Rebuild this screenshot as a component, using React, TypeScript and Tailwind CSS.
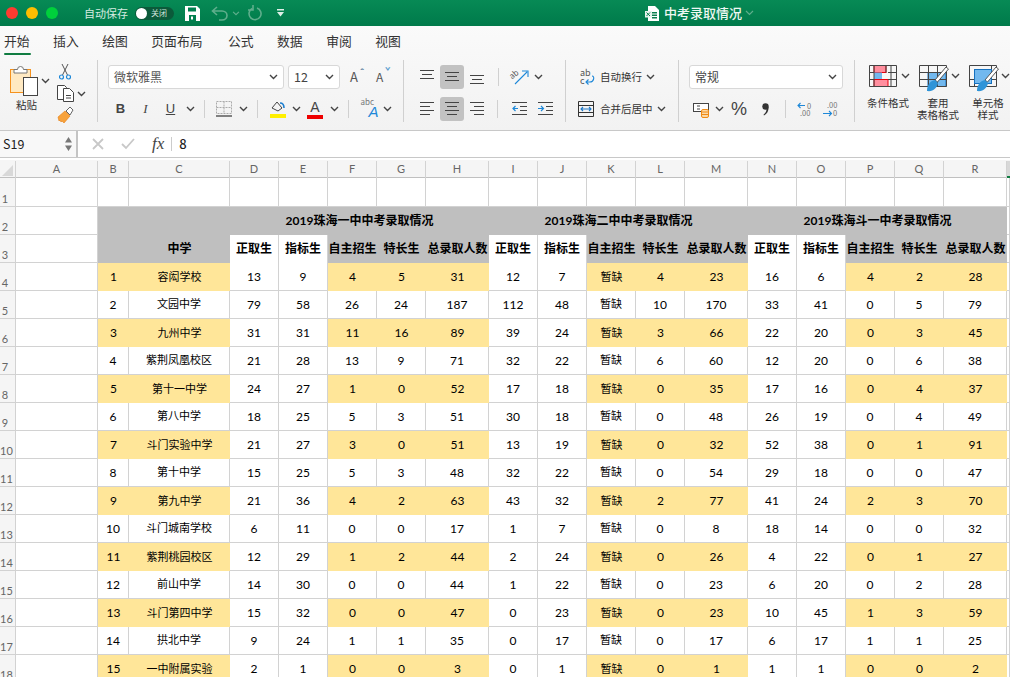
import type { ReactNode } from 'react';

const CJK = "font-['Lato','Noto_Sans_CJK_SC',sans-serif]";
const LINE = 'border-[#d2d2d2]';
const COLS =
  'grid grid-cols-[16px_82px_31px_101px_49px_49px_49px_49px_63px_49px_49px_49px_49px_63px_49px_49px_49px_49px_63px_3px]';

type Row = [string, ...(number | string)[]];

const ROWS: Row[] = [
  ['容闳学校', 13, 9, 4, 5, 31, 12, 7, '暂缺', 4, 23, 16, 6, 4, 2, 28],
  ['文园中学', 79, 58, 26, 24, 187, 112, 48, '暂缺', 10, 170, 33, 41, 0, 5, 79],
  ['九州中学', 31, 31, 11, 16, 89, 39, 24, '暂缺', 3, 66, 22, 20, 0, 3, 45],
  ['紫荆凤凰校区', 21, 28, 13, 9, 71, 32, 22, '暂缺', 6, 60, 12, 20, 0, 6, 38],
  ['第十一中学', 24, 27, 1, 0, 52, 17, 18, '暂缺', 0, 35, 17, 16, 0, 4, 37],
  ['第八中学', 18, 25, 5, 3, 51, 30, 18, '暂缺', 0, 48, 26, 19, 0, 4, 49],
  ['斗门实验中学', 21, 27, 3, 0, 51, 13, 19, '暂缺', 0, 32, 52, 38, 0, 1, 91],
  ['第十中学', 15, 25, 5, 3, 48, 32, 22, '暂缺', 0, 54, 29, 18, 0, 0, 47],
  ['第九中学', 21, 36, 4, 2, 63, 43, 32, '暂缺', 2, 77, 41, 24, 2, 3, 70],
  ['斗门城南学校', 6, 11, 0, 0, 17, 1, 7, '暂缺', 0, 8, 18, 14, 0, 0, 32],
  ['紫荆桃园校区', 12, 29, 1, 2, 44, 2, 24, '暂缺', 0, 26, 4, 22, 0, 1, 27],
  ['前山中学', 14, 30, 0, 0, 44, 1, 22, '暂缺', 0, 23, 6, 20, 0, 2, 28],
  ['斗门第四中学', 15, 32, 0, 0, 47, 0, 23, '暂缺', 0, 23, 10, 45, 1, 3, 59],
  ['拱北中学', 9, 24, 1, 1, 35, 0, 17, '暂缺', 0, 17, 6, 17, 1, 1, 25],
  ['一中附属实验', 2, 1, 0, 0, 3, 0, 1, '暂缺', 0, 1, 1, 1, 0, 0, 2],
];

const LETTERS = 'ABCDEFGHIJKLMNOPQRS'.split('');
const SUB = ['正取生', '指标生', '自主招生', '特长生', '总录取人数'];

// white columns inside a striped row: D E, I J, N O (index in the number list)
const isWhite = (i: number) => i % 5 < 2;

function Chev({ className = '' }: { className?: string }) {
  return (
    <svg width="9" height="6" viewBox="0 0 9 6" className={className} fill="none" stroke="#444" strokeWidth="1.4">
      <path d="M1 1l3.5 3.5L8 1" />
    </svg>
  );
}

function Cell({ className, children }: { className: string; children?: ReactNode }) {
  return <div className={`flex h-6 shrink-0 items-center justify-center ${className}`}>{children}</div>;
}

function Sep({ className }: { className: string }) {
  return (
    <Cell className={className}>
      <div className="h-[18px] w-px bg-[#d0d0d0]" />
    </Cell>
  );
}

function Lines({ kind }: { kind: 'top' | 'mid' | 'bot' | 'left' | 'center' | 'right' }) {
  const d = {
    top: 'M0 1.5h14M2 5.5h10M0 9.5h14',
    mid: 'M0 3.5h14M2 7.5h10M0 11.5h14',
    bot: 'M0 6.5h14M2 10.5h10M0 14.5h14',
    left: 'M0 1.5h14M0 5.5h10M0 9.5h14M0 13.5h10',
    center: 'M0 1.5h14M2 5.5h10M0 9.5h14M2 13.5h10',
    right: 'M0 1.5h14M4 5.5h10M0 9.5h14M4 13.5h10',
  }[kind];
  return (
    <svg width="14" height="16" viewBox="0 0 14 16" fill="none" stroke="#444" strokeWidth="1">
      <path d={d} />
    </svg>
  );
}

function TableIcon({ kind }: { kind: 'cond' | 'table' | 'cell' }) {
  return (
    <svg width="30" height="27" viewBox="0 0 30 27" fill="none">
      {kind === 'cond' && (
        <>
          <rect x="5" y="0.5" width="12" height="7" fill="#ff8e9e" stroke="#e8000c" />
          <rect x="5" y="7.5" width="8" height="7" fill="#72b8ee" />
          <rect x="5" y="14.5" width="14" height="7" fill="#ff8e9e" stroke="#e8000c" />
          <path d="M.5.5h27v21H.5zM.5 7.500h4.500M.5 14.500h4.500M19 7.500h8.500M19 14.500h8.500M5 .5v21M22 .5v21M17 .5v7" stroke="#444" />
        </>
      )}
      {kind === 'table' && (
        <>
          <rect x="9" y="7.500" width="18" height="14" fill="#72b8ee" stroke="#1570bf" />
          <path d="M.5.5h27v21H.5zM.5 7.500h27M.5 14.500h27M9.500 .5v21M18.500 .5v21" stroke="#444" />
        </>
      )}
      {kind === 'cell' && (
        <>
          <path d="M.5.5h27v21H.5zM.5 14.500h4.500M22 14.500h5.500M5.500 18v4M22.500 .5v4" stroke="#444" />
          <rect x="5.500" y="4.500" width="17" height="14" fill="#72b8ee" stroke="#1570bf" />
        </>
      )}
      {kind !== 'cond' && (
        <>
          <path d="M16 15L27 2l2.500 2-11 13z" fill="#fff" stroke="#555" />
          <path d="M8 26c0-6 3-10 8-11l3 3c-1 5-5 9-11 8z" fill="#2f94d8" />
        </>
      )}
    </svg>
  );
}

function StyleButton({ kind, label }: { kind: 'cond' | 'table' | 'cell'; label: string[] }) {
  return (
    <div className="flex w-[50px] shrink-0 flex-col items-center">
      <div className="flex h-[32px] items-start gap-[3px] self-start pl-[6px] pt-[5px]">
        <TableIcon kind={kind} />
        <Chev className="-ml-[1px] mt-[8px]" />
      </div>
      <div className="mt-[5px] whitespace-nowrap text-center text-[10.5px] leading-[12px] text-[#333]">
        {label.map((l) => (
          <div key={l}>{l}</div>
        ))}
      </div>
    </div>
  );
}

function TitleBar() {
  return (
    <div className="relative flex h-[26px] items-center bg-gradient-to-b from-[#078a55] to-[#007a4a]">
      <div className="ml-[6px] h-3 w-3 rounded-full bg-[#ff3b30]" />
      <div className="ml-2 h-3 w-3 rounded-full bg-[#ffbd00]" />
      <div className="ml-2 h-3 w-3 rounded-full bg-[#00d03c]" />
      <span className="ml-[26px] text-[11px] text-[#d5ebe0]">自动保存</span>
      <div className="ml-[7px] flex h-[13px] w-[39px] items-center rounded-full bg-[#0b5a3a] pl-px">
        <div className="h-[11px] w-[11px] rounded-full bg-white" />
        <span className="ml-[4px] text-[8px] text-[#cfe5da]">关闭</span>
      </div>
      <svg width="15" height="15" viewBox="0 0 15 15" className="ml-[11px]">
        <path d="M0 0h12l3 3v12H0z" fill="#fff" />
        <path d="M3 1.5h8v4H3z" fill="#007f4e" />
        <path d="M4 9h7v6H4z" fill="#007f4e" />
        <path d="M6 10.5h2v3H6z" fill="#fff" />
      </svg>
      <svg width="18" height="15" viewBox="0 0 18 15" className="ml-[11px]" fill="none" stroke="#5fae8c" strokeWidth="1.6">
        <path d="M6 1L1.5 5 6 9M2 5h9c3 0 5 2 5 4.5S14 14 11 14H8" />
      </svg>
      <svg width="8" height="5" viewBox="0 0 9 6" className="ml-[3px]" fill="none" stroke="#5fae8c" strokeWidth="1.4">
        <path d="M1 1l3.5 3.5L8 1" />
      </svg>
      <svg width="15" height="16" viewBox="0 0 15 16" className="ml-[8px]" fill="none" stroke="#5fae8c" strokeWidth="1.6">
        <path d="M4 3.5a6 6 0 1 0 5-.5M5 0v5H0" />
      </svg>
      <svg width="7" height="8" viewBox="0 0 7 8" className="ml-[14px]" fill="#dff0e8">
        <path d="M0 0h7v1.4H0zM0 3h7L3.5 7.5z" />
      </svg>
      <div className="ml-[361px] flex items-center">
        <svg width="14" height="15" viewBox="0 0 14 15">
          <path d="M3 0h7l4 4v11H3z" fill="#fff" />
          <path d="M7 6h5v1.4H7zM7 8.5h5v1.4H7zM7 11h5v1.4H7z" fill="#0a7d4d" />
          <rect x="0" y="5" width="7" height="6.5" fill="#e8f4ee" />
          <path d="M1.5 6.5l3.5 3.5M5 6.5L1.5 10" stroke="#0a7d4d" strokeWidth="1" />
        </svg>
        <span className="ml-[5px] text-[13px] font-medium text-[#eef7f2]">中考录取情况</span>
        <svg width="9" height="6" viewBox="0 0 9 6" className="ml-[3px]" fill="none" stroke="#5fae8c" strokeWidth="1.2">
          <path d="M1 1l3.5 3.5L8 1" />
        </svg>
      </div>
    </div>
  );
}

function Tabs() {
  const tabs = ['开始', '插入', '绘图', '页面布局', '公式', '数据', '审阅', '视图'];
  return (
    <div className="flex h-[27px] gap-[23.5px] pl-1 pt-[6px] text-[12.8px] leading-[18px] text-[#333]">
      {tabs.map((t, i) => (
        <div key={t} className={`relative whitespace-nowrap ${t === '页面布局' ? 'mr-[2px]' : ''}`}>
          {t}
          {i === 0 && <div className="absolute -bottom-[2px] left-0 h-[2px] w-[27px] rounded bg-[#107c41]" />}
        </div>
      ))}
    </div>
  );
}

function Ribbon() {
  return (
    <div className="flex h-[77px] pt-[7px]">
      {/* clipboard */}
      <div className="relative h-[62px] w-[98px] shrink-0 border-r border-[#d0d0d0]">
        <div className="flex">
          <div className="ml-[10px] flex w-[28px] shrink-0 flex-col items-start">
            <svg width="28" height="31" viewBox="0 0 28 31" className="mt-[5px]">
              <rect x="0.5" y="4.5" width="20" height="23" fill="#ffe9c2" stroke="#f5921e" />
              <path d="M4 8V4.5h3.5a3 3 0 0 1 6 0H17V8z" fill="#fff" stroke="#777" />
              <rect x="13.5" y="12.5" width="14" height="18" fill="#fff" stroke="#444" />
            </svg>
            <span className="ml-[6px] mt-[2px] whitespace-nowrap text-[10.5px] leading-[14px] text-[#333]">粘贴</span>
          </div>
          <Chev className="ml-[3px] mt-[18px]" />
          <div className="ml-[7px] flex flex-col items-start">
            <svg width="12" height="16" viewBox="0 0 12 16" className="ml-[2px] mt-[4px]" fill="none">
              <path d="M3 0l5.5 11M9 0L3.5 11" stroke="#555" />
              <circle cx="2.5" cy="13" r="2" stroke="#1e88d8" strokeWidth="1.2" />
              <circle cx="9.5" cy="13" r="2" stroke="#1e88d8" strokeWidth="1.2" />
            </svg>
            <div className="mt-[5px] flex items-center">
              <svg width="17" height="17" viewBox="0 0 17 17" fill="#fff" stroke="#444">
                <path d="M.5.5h7l2 2v12H.5z" />
                <path d="M6.5 3.5h6l4 4v9h-10z" />
                <path d="M9 10.5h5M9 13h5" />
              </svg>
              <Chev className="ml-[3px]" />
            </div>
            <svg width="17" height="16" viewBox="0 0 17 16" className="mt-[5px]">
              <path d="M1 10l7-6 5 5-6 7-2-2-1 1-1-2-1 1z" fill="#f7a23b" stroke="#e67e12" strokeWidth="0.6" />
              <path d="M9 4l4-4 3 3-3 5z" fill="#fff" stroke="#666" />
            </svg>
          </div>
        </div>
      </div>

      {/* font */}
      <div className="h-[62px] w-[306px] shrink-0 border-r border-[#d0d0d0] pl-[10px] pt-[5px]">
        <div className="flex h-6 items-center">
          <div className="flex h-6 w-[176px] items-center justify-between rounded-[3px] border border-[#d8d8d8] bg-white px-[5px] text-[12px] text-[#555]">
            微软雅黑
            <Chev />
          </div>
          <div className="ml-1 flex h-6 w-[52px] items-center justify-between rounded-[3px] border border-[#d8d8d8] bg-white pl-[5px] pr-[5px] text-[12.5px] text-[#444]">
            12
            <Chev />
          </div>
          <span className="relative ml-[10px] w-[20px] text-[13px] text-[#555]">
            A<span className="absolute -top-[2px] left-[10px] text-[9px] font-bold text-[#5a7e9c]">ˆ</span>
          </span>
          <span className="relative ml-[6px] text-[12px] text-[#555]">
            A<span className="absolute -top-[3px] left-[9px] text-[9px] font-bold text-[#5a9ccf]">ˇ</span>
          </span>
        </div>
        <div className="mt-2 flex text-[#444]">
          <Cell className="w-[25px] font-['Liberation_Sans',sans-serif] text-[13px] font-bold">B</Cell>
          <Cell className="w-[25px] font-['Liberation_Serif',serif] text-[13px] italic">I</Cell>
          <Cell className="w-[25px] font-['Liberation_Sans',sans-serif] text-[13px] underline">U</Cell>
          <Cell className="w-[14px]"><Chev /></Cell>
          <Sep className="w-[14px]" />
          <Cell className="w-[26px]">
            <svg width="16" height="16" viewBox="0 0 16 16" fill="none">
              <path d="M.5.5h15v12H.5zM8 .5v12M.5 6.5h15" stroke="#aaa" strokeDasharray="2 1" />
              <path d="M0 15h16" stroke="#333" strokeWidth="1.2" />
            </svg>
          </Cell>
          <Cell className="w-[12px]"><Chev /></Cell>
          <Sep className="w-[16px]" />
          <Cell className="w-[26px]">
            <svg width="16" height="19" viewBox="0 0 16 19" fill="none">
              <path d="M2 8l5-6 5 6-4 3z" stroke="#444" />
              <path d="M10 3c3 0 4 2 4 5" stroke="#1e7fd0" strokeWidth="1.6" />
              <rect x="0" y="14" width="16" height="4" fill="#ffef00" />
            </svg>
          </Cell>
          <Cell className="w-[10px]"><Chev /></Cell>
          <Cell className="w-[28px]">
            <div className="flex flex-col items-center">
              <span className="font-['Liberation_Sans',sans-serif] text-[14px] leading-[14px] text-[#444]">A</span>
              <div className="mt-px h-1 w-4 bg-[#ee0000]" />
            </div>
          </Cell>
          <Cell className="w-[10px]"><Chev /></Cell>
          <Sep className="w-[18px]" />
          <Cell className="w-[25px]">
            <div className="relative h-5 w-[18px]">
              <span className="absolute -top-[2px] left-0 text-[8px] leading-[10px] text-[#777]">abc</span>
              <span className="absolute bottom-0 right-0 font-['Liberation_Sans',sans-serif] text-[15px] italic leading-[15px] text-[#1e88d8]">A</span>
            </div>
          </Cell>
          <Cell className="w-[10px]"><Chev /></Cell>
        </div>
      </div>

      {/* alignment */}
      <div className="h-[62px] w-[162px] shrink-0 border-r border-[#d0d0d0] pl-[12px] pt-[5px]">
        <div className="flex">
          <Cell className="w-[22px]"><Lines kind="top" /></Cell>
          <Cell className="ml-[2px] w-[24px] rounded-[3px] bg-[#c2c2c2]"><Lines kind="mid" /></Cell>
          <Cell className="w-[26px]"><Lines kind="bot" /></Cell>
          <Sep className="w-[16px]" />
          <Cell className="w-[27px]">
            <svg width="18" height="16" viewBox="0 0 18 16" fill="none" className="overflow-visible">
              <path d="M4 15L16 3M11 2h6v6" stroke="#1e88d8" strokeWidth="1.1" />
              <text x="0" y="8" fontSize="8" fill="#555" transform="rotate(-40 4 8)">ab</text>
            </svg>
          </Cell>
          <Cell className="w-[10px]"><Chev /></Cell>
        </div>
        <div className="mt-2 flex">
          <Cell className="w-[22px]"><Lines kind="left" /></Cell>
          <Cell className="ml-[2px] w-[24px] rounded-[3px] bg-[#c2c2c2]"><Lines kind="center" /></Cell>
          <Cell className="w-[26px]"><Lines kind="right" /></Cell>
          <Sep className="w-[15px]" />
          <Cell className="w-[28px]">
            <svg width="15" height="14" viewBox="0 0 15 14" fill="none">
              <path d="M0 .5h15M8 4.5h7M8 8.5h7M0 12.5h15" stroke="#444" />
              <path d="M6 6.5H1M3.5 4L1 6.5 3.5 9" stroke="#1e88d8" strokeWidth="1.2" />
            </svg>
          </Cell>
          <Cell className="w-[25px]">
            <svg width="15" height="14" viewBox="0 0 15 14" fill="none">
              <path d="M0 .5h15M8 4.5h7M8 8.5h7M0 12.5h15" stroke="#444" />
              <path d="M0 6.5h5M3 4l2.5 2.5L3 9" stroke="#1e88d8" strokeWidth="1.2" />
            </svg>
          </Cell>
        </div>
      </div>

      {/* wrap and merge */}
      <div className="h-[62px] w-[113px] shrink-0 border-r border-[#d0d0d0] pl-[13px] pt-[5px] text-[10.5px] text-[#333]">
        <div className="flex h-6 items-center">
          <svg width="16" height="18" viewBox="0 0 16 18" fill="none" className="overflow-visible">
            <text x="1" y="8" fontSize="9" fill="#555">ab</text>
            <text x="1" y="16" fontSize="9" fill="#555">c</text>
            <path d="M13 8c3 0 2 6-2 6H7M9.5 11.500L7 14l2.500 2.500" stroke="#1e88d8" strokeWidth="1.1" />
          </svg>
          <span className="ml-[5px] w-[42px] whitespace-nowrap">自动换行</span>
          <Chev className="ml-[4px]" />
        </div>
        <div className="mt-2 flex h-6 items-center">
          <svg width="16" height="16" viewBox="0 0 16 16" fill="none" className="-ml-px">
            <path d="M.5.5h15v15H.5zM.5 4.500h15M.5 11.500h15" stroke="#333" />
            <path d="M3 8h10M5 6L3 8l2 2M11 6l2 2-2 2" stroke="#1e78c8" strokeWidth="1.1" />
          </svg>
          <span className="ml-[6px] w-[53px] whitespace-nowrap">合并后居中</span>
          <Chev className="ml-[4px]" />
        </div>
      </div>

      {/* number */}
      <div className="h-[62px] w-[176px] shrink-0 border-r border-[#d0d0d0] pl-[10px] pt-[5px]">
        <div className="flex h-6 w-[154px] items-center justify-between rounded-[3px] border border-[#d8d8d8] bg-white px-[5px] text-[12px] text-[#444]">
          常规
          <Chev />
        </div>
        <div className="mt-2 flex">
          <Cell className="w-[24px]">
            <svg width="17" height="17" viewBox="0 0 17 17" fill="none">
              <rect x="0.5" y="2.500" width="15" height="8" stroke="#444" fill="#fff" />
              <path d="M4 5h3M4 8h3" stroke="#444" />
              <rect x="8.500" y="8.500" width="7" height="8" rx="1.500" fill="#fbd9a8" stroke="#f08a14" />
              <path d="M8.500 11h7M8.500 13.500h7" stroke="#f08a14" />
            </svg>
          </Cell>
          <Cell className="w-[12px]"><Chev /></Cell>
          <Cell className="w-[28px] font-['Liberation_Sans',sans-serif] text-[18px] text-[#444]">%</Cell>
          <Cell className="w-[24px]">
            <svg width="7" height="13" viewBox="0 0 7 13" fill="#333">
              <circle cx="3.500" cy="3.500" r="3.200" />
              <path d="M6.500 4c.3 4-1.500 7-4.500 8.500l-.5-.8C3.800 10 4.500 8 4.500 6z" />
            </svg>
          </Cell>
          <Sep className="w-[16px]" />
          <Cell className="w-[25px]">
            <svg width="17" height="17" viewBox="0 0 17 17" fill="none" className="overflow-visible">
              <path d="M8 4.500H1M3.500 2L1 4.500 3.500 7" stroke="#1e88d8" strokeWidth="1.1" />
              <text x="10" y="8" fontSize="7.500" fill="#777">0</text>
              <text x="3" y="15" fontSize="7.500" fill="#777">.00</text>
            </svg>
          </Cell>
          <Cell className="w-[27px]">
            <svg width="17" height="17" viewBox="0 0 17 17" fill="none" className="overflow-visible">
              <text x="4" y="7" fontSize="7.500" fill="#777">.00</text>
              <path d="M0 12.500h8M6 10l2.500 2.500L6 15" stroke="#1e88d8" strokeWidth="1.1" />
              <text x="10" y="15" fontSize="7.500" fill="#777">0</text>
            </svg>
          </Cell>
        </div>
      </div>

      {/* styles */}
      <div className="flex h-[62px] flex-1 pl-2">
        <StyleButton kind="cond" label={['条件格式']} />
        <StyleButton kind="table" label={['套用', '表格格式']} />
        <StyleButton kind="cell" label={['单元格', '样式']} />
      </div>
    </div>
  );
}

function FormulaBar() {
  return (
    <div className="flex h-7 border-b border-t border-[#c8c8c8] bg-white">
      <div className="flex w-[78px] shrink-0 items-center justify-between border-r-2 border-[#c4c4c4] bg-[#f8f8f8] pl-[3px] pr-[4px]">
        <span className="text-[12.5px] text-[#222]">S19</span>
        <svg width="7" height="16" viewBox="0 0 7 16" fill="#777">
          <path d="M3.500 1L7 6.500H0zM3.500 15L7 9.500H0z" />
        </svg>
      </div>
      <div className="flex flex-1 items-center">
        <svg width="12" height="12" viewBox="0 0 12 12" className="ml-[14px]" fill="none" stroke="#c8c8c8" strokeWidth="1.8">
          <path d="M1 1l10 10M11 1L1 11" />
        </svg>
        <svg width="14" height="12" viewBox="0 0 14 12" className="ml-[17px]" fill="none" stroke="#c8c8c8" strokeWidth="1.8">
          <path d="M1 6l4 4 8-9" />
        </svg>
        <span className="ml-[17px] font-['Liberation_Serif',serif] text-[17px] italic text-[#444]">fx</span>
        <div className="ml-[7px] h-[14px] w-px bg-[#ccc]" />
        <span className="ml-[7px] text-[13px] font-medium text-[#222]">8</span>
      </div>
    </div>
  );
}

function RowHead({ n }: { n: number }) {
  return (
    <div className={`flex items-end justify-start border-b border-r ${LINE} bg-[#f5f5f5]`}>
      <span className="w-[10px] overflow-visible text-center text-[11px] leading-[14px] text-[#666]">{n}</span>
    </div>
  );
}

function Sheet() {
  const blank = `border-b border-r ${LINE} bg-white`;
  return (
    <div className={`mt-[2px] ${CJK}`}>
      {/* column letters */}
      <div className={`${COLS} h-[18px] border-b border-[#c0c0c0] bg-[#f5f5f5] pt-px text-[11px] text-[#666]`}>
        <div className={`relative border-r ${LINE}`}>
          <svg width="11" height="11" viewBox="0 0 11 11" className="absolute bottom-[2px] right-[2px]">
            <path d="M11 0v11H0z" fill="#d8d8d8" />
          </svg>
        </div>
        {LETTERS.map((c) => (
          <div
            key={c}
            className={
              c === 'S'
                ? 'border-b-2 border-[#107c41] bg-[#d8d8d8]'
                : `flex items-center justify-center border-r ${LINE}`
            }
          >
            {c !== 'S' && c}
          </div>
        ))}
      </div>

      {/* row 1: empty */}
      <div className={`${COLS} h-[29px]`}>
        <RowHead n={1} />
        {LETTERS.map((c) => (
          <div key={c} className={blank} />
        ))}
      </div>

      {/* row 2: block titles */}
      <div className={`${COLS} h-[28px]`}>
        <RowHead n={2} />
        <div className={blank} />
        <div className="col-span-2 bg-[#bfbfbf]" />
        <div className="col-span-5 flex items-center justify-center bg-[#bfbfbf] text-[12px] font-bold text-black">2019珠海一中中考录取情况</div>
        <div className="col-span-5 flex items-center justify-center bg-[#bfbfbf] text-[12px] font-bold text-black">2019珠海二中中考录取情况</div>
        <div className="col-span-5 flex items-center justify-center bg-[#bfbfbf] text-[12px] font-bold text-black">2019珠海斗一中考录取情况</div>
        <div className={blank} />
      </div>

      {/* row 3: field names */}
      <div className={`${COLS} h-[28px]`}>
        <RowHead n={3} />
        <div className={blank} />
        <div className="bg-[#bfbfbf]" />
        <div className="flex items-center justify-center bg-[#bfbfbf] text-[12px] font-bold text-black">中学</div>
        {[0, 1, 2].flatMap((b) =>
          SUB.map((s, i) => (
            <div
              key={`${b}-${s}`}
              className={`flex items-center justify-center whitespace-nowrap text-[12px] font-bold text-black ${
                i < 2 ? `border-r ${LINE} bg-white` : 'bg-[#bfbfbf]'
              }`}
            >
              {s}
            </div>
          )),
        )}
        <div className={blank} />
      </div>

      {/* data rows */}
      {ROWS.map(([school, ...nums], r) => {
        const striped = r % 2 === 0;
        const plain = `flex items-center justify-center border-b border-r ${LINE} bg-white`;
        const fill = 'flex items-center justify-center bg-[#ffe699]';
        return (
          <div key={school} className={`${COLS} h-[28px] text-[12px] text-black`}>
            <RowHead n={r + 4} />
            <div className={blank} />
            <div className={striped ? fill : plain}>{r + 1}</div>
            <div className={`${striped ? fill : plain} text-[11px]`}>{school}</div>
            {nums.map((v, i) => (
              <div
                key={i}
                className={`${striped && !isWhite(i) ? fill : plain} ${typeof v === 'string' ? 'text-[11px]' : ''}`}
              >
                {v}
              </div>
            ))}
            <div className={blank} />
          </div>
        );
      })}
    </div>
  );
}

export default function App() {
  return (
    <div className="h-[677px] w-[1010px] overflow-hidden bg-white font-['Noto_Sans_CJK_SC','Noto_Sans',sans-serif]">
      <TitleBar />
      <div className="bg-gradient-to-b from-[#fafafa] to-[#f2f2f2]">
        <Tabs />
        <Ribbon />
      </div>
      <FormulaBar />
      <Sheet />
    </div>
  );
}
